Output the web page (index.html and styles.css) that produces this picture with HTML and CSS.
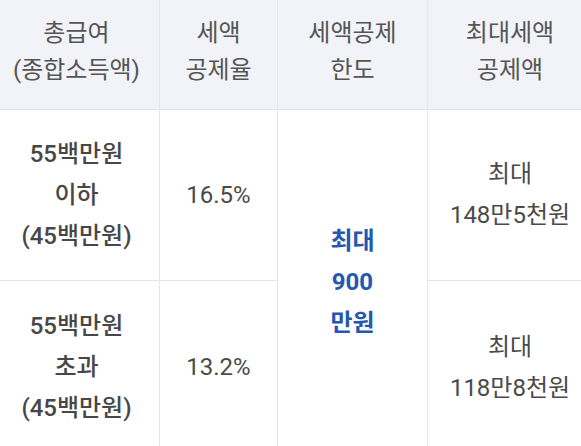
FILE: index.html
```html
<!DOCTYPE html>
<html lang="ko">
<head>
<meta charset="utf-8">
<link rel="stylesheet" href="styles.css">
</head>
<body>
<div class="table">
  <div class="cell head c1">총급여<br>(종합소득액)</div>
  <div class="cell head">세액<br>공제율</div>
  <div class="cell head">세액공제<br>한도</div>
  <div class="cell head last">최대세액<br>공제액</div>

  <div class="cell body c1 strong">55백만원<br>이하<br>(45백만원)</div>
  <div class="cell body">16.5%</div>
  <div class="cell body merged">최대<br>900<br>만원</div>
  <div class="cell body last">최대<br>148만5천원</div>

  <div class="cell body c1 strong">55백만원<br>초과<br>(45백만원)</div>
  <div class="cell body">13.2%</div>
  <div class="cell body last">최대<br>118만8천원</div>
</div>
</body>
</html>
```
FILE: styles.css
```css
html, body {
  margin: 0;
  padding: 0;
  background: #ffffff;
  overflow: hidden;
}
.table {
  display: grid;
  grid-template-columns: 160px 118px 150px 164px;
  grid-template-rows: 110px 171px 174px;
  font-family: Roboto, "Noto Sans CJK KR", sans-serif;
  font-size: 24px;
  color: #4a4a4a;
}
.cell {
  display: flex;
  align-items: center;
  justify-content: center;
  text-align: center;
  border-right: 1px solid #e4e6ee;
  border-bottom: 1px solid #e4e6ee;
  box-sizing: border-box;
}
.cell.last {
  border-right: none;
}
.head {
  background: #f2f3f8;
  line-height: 37px;
  color: #555555;
  padding-bottom: 6px;
}
.body {
  line-height: 41px;
}
.c1 {
  padding-right: 6px;
}
.strong {
  font-weight: 500;
  color: #474747;
}
.merged {
  grid-column: 3;
  grid-row: 2 / span 2;
  color: #2457b0;
  font-weight: 700;
}
```
